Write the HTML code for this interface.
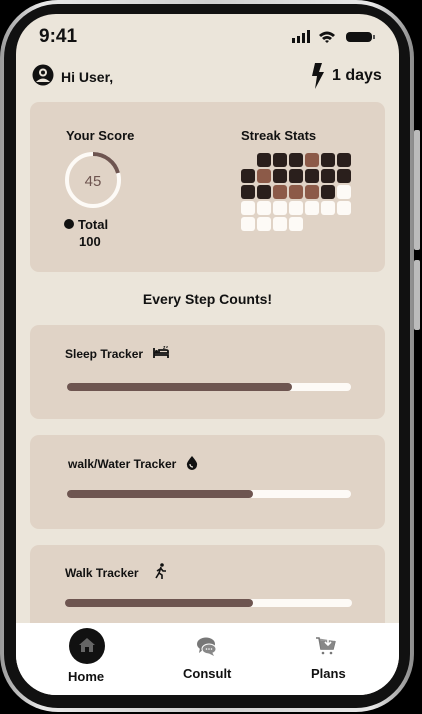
<!DOCTYPE html>
<html><head><style>
*{margin:0;padding:0;box-sizing:border-box}
body{width:422px;height:714px;background:#000;position:relative;overflow:hidden;font-family:"Liberation Sans",sans-serif;color:#111}
.frame{position:absolute;left:0;top:0;width:414px;height:712px;border-radius:58px;background:linear-gradient(90deg,#9a9a9a,#e8e8e8 10%,#cfcfcf 50%,#e8e8e8 90%,#8a8a8a)}
.bez{position:absolute;left:4px;top:4px;width:406px;height:704px;border-radius:54px;background:#111}
.btn{position:absolute;right:0;width:6px;background:#bbb;border-radius:2px}
.screen{position:absolute;left:16px;top:14px;width:383px;height:681px;border-radius:40px;background:#ebe5da;overflow:hidden}
.a{position:absolute}
.card{position:absolute;left:14px;width:355px;background:#e0d3c6;border-radius:9px}
.bar{position:absolute;height:8px;background:#fdfaf6;border-radius:4px}
.fill{height:8px;background:#6e5550;border-radius:4px}
.g{position:absolute;left:225px;top:139px;display:grid;grid-template-columns:repeat(7,14px);gap:2px}
.g i{display:block;width:14px;height:14px;border-radius:3px}
.d{background:#2a1f1c}.b{background:#8c5a48}.w{background:#fdfaf6}.n{background:transparent}
.t{font-size:13px;font-weight:bold}
</style></head><body>
<div class="frame"></div><div class="bez"></div>
<div class="btn" style="top:130px;height:120px;right:2px"></div>
<div class="btn" style="top:260px;height:70px;right:2px"></div>
<div class="screen">
<div class="a" style="left:23px;top:12px;font-size:19px;font-weight:bold">9:41</div>
<svg class="a" style="left:274px;top:16px" width="90" height="14" viewBox="0 0 90 14">
<rect x="2" y="8" width="3" height="5" fill="#111"/><rect x="7" y="6" width="3" height="7" fill="#111"/><rect x="12" y="3" width="3" height="10" fill="#111"/><rect x="17" y="0" width="3" height="13" fill="#111"/>
<path d="M29 5 Q37 -2 45 5 L43 7 Q37 2 31 7Z M32 8 Q37 4 42 8 L40 10 Q37 7.5 34 10Z M35 11 L37 13 L39 11 Q37 9.5 35 11Z" fill="#111"/>
<rect x="56" y="2" width="26" height="10" rx="4" fill="#111"/><rect x="83" y="5" width="2" height="4" fill="#555"/>
</svg>
<svg class="a" style="left:16px;top:50px" width="22" height="22" viewBox="0 0 22 22"><circle cx="11" cy="11" r="10.5" fill="#111"/><circle cx="11" cy="8.5" r="4" fill="#ebe5da"/><circle cx="11" cy="8.5" r="2" fill="#111"/><path d="M4 18 Q11 11 18 18" fill="#ebe5da"/></svg>
<div class="a" style="left:45px;top:55px;font-size:14px;font-weight:bold">Hi User,</div>
<svg class="a" style="left:295px;top:49px" width="14" height="26" viewBox="0 0 14 26"><path d="M4 0 H11 L8 9 H13 L4 26 L6 13 H1Z" fill="#111"/></svg>
<div class="a" style="left:316px;top:53px;font-size:16px;font-weight:bold">1 days</div>

<div class="card" style="top:88px;height:170px"></div>
<div class="a t" style="left:50px;top:114px">Your Score</div>
<div class="a t" style="left:225px;top:114px">Streak Stats</div>
<svg class="a" style="left:48px;top:137px" width="58" height="58" viewBox="0 0 58 58"><circle cx="29" cy="29" r="26" fill="none" stroke="#fdfaf6" stroke-width="4"/><path d="M29 3 A26 26 0 0 1 54 22" fill="none" stroke="#6e5550" stroke-width="4"/><text x="29" y="35" text-anchor="middle" font-size="15" fill="#6e5550" font-family="Liberation Sans">45</text></svg>
<div class="a" style="left:48px;top:205px;width:10px;height:10px;border-radius:50%;background:#111"></div>
<div class="a t" style="left:62px;top:203px">Total</div>
<div class="a t" style="left:63px;top:220px">100</div>
<div class="g">
<i class="n"></i><i class="d"></i><i class="d"></i><i class="d"></i><i class="b"></i><i class="d"></i><i class="d"></i>
<i class="d"></i><i class="b"></i><i class="d"></i><i class="d"></i><i class="d"></i><i class="d"></i><i class="d"></i>
<i class="d"></i><i class="d"></i><i class="b"></i><i class="b"></i><i class="b"></i><i class="d"></i><i class="w"></i>
<i class="w"></i><i class="w"></i><i class="w"></i><i class="w"></i><i class="w"></i><i class="w"></i><i class="w"></i>
<i class="w"></i><i class="w"></i><i class="w"></i><i class="w"></i>
</div>

<div class="a t" style="left:0;width:383px;text-align:center;top:277px;font-size:14px">Every Step Counts!</div>

<div class="card" style="top:311px;height:94px"></div>
<div class="a" style="left:49px;top:333px;font-size:12px;font-weight:bold">Sleep Tracker</div>
<svg class="a" style="left:137px;top:331px" width="16" height="14" viewBox="0 0 16 14"><path d="M1 3 V13 M1 10 H15 V13 M1 8 H15 V6 Q15 5 13 5 H6 V8" stroke="#111" stroke-width="1.8" fill="none"/><circle cx="3.5" cy="6.5" r="1.5" fill="#111"/><text x="10" y="4" font-size="5" font-weight="bold" fill="#111">z</text><text x="13" y="3" font-size="4" font-weight="bold" fill="#111">z</text></svg>
<div class="bar" style="left:51px;top:369px;width:284px"><div class="fill" style="width:225px"></div></div>

<div class="card" style="top:421px;height:94px"></div>
<div class="a" style="left:52px;top:443px;font-size:12px;font-weight:bold">walk/Water Tracker</div>
<svg class="a" style="left:170px;top:442px" width="12" height="14" viewBox="0 0 12 14"><path d="M6 0 Q12 7 11 9 A5 5 0 0 1 1 9 Q0 7 6 0Z" fill="#111"/><path d="M4 8 Q4 11 7 11" stroke="#ebe5da" stroke-width="1.2" fill="none"/></svg>
<div class="bar" style="left:51px;top:476px;width:284px"><div class="fill" style="width:186px"></div></div>

<div class="card" style="top:531px;height:100px"></div>
<div class="a" style="left:49px;top:552px;font-size:12px;font-weight:bold">Walk Tracker</div>
<svg class="a" style="left:139px;top:549px" width="12" height="16" viewBox="0 0 12 16"><circle cx="7" cy="2" r="1.8" fill="#111"/><path d="M6 4 L4 10 L1 15 M4 10 L7 12 L7 16 M5 6 L2 8 M5.5 5 L8 8 L11 8" stroke="#111" stroke-width="1.6" fill="none"/></svg>
<div class="bar" style="left:49px;top:585px;width:287px"><div class="fill" style="width:188px"></div></div>

<div class="a" style="left:0;top:609px;width:383px;height:72px;background:#fff"></div>
<div class="a" style="left:53px;top:614px;width:36px;height:36px;border-radius:50%;background:#111"></div>
<svg class="a" style="left:62px;top:622px" width="18" height="18" viewBox="0 0 18 18"><path d="M9 2 L17 9 H15 V16 H3 V9 H1Z" fill="#666"/><rect x="7" y="11" width="4" height="5" fill="#111"/></svg>
<div class="a t" style="left:52px;top:655px">Home</div>
<svg class="a" style="left:181px;top:623px" width="20" height="20" viewBox="0 0 20 20"><ellipse cx="9" cy="7" rx="9" ry="6.5" fill="#777"/><path d="M3 11 L2 16 L7 12Z" fill="#777"/><ellipse cx="12" cy="12" rx="7" ry="5" fill="#888" stroke="#fff" stroke-width="1"/><path d="M15 15 L17 19 L11 16Z" fill="#888"/><circle cx="9.5" cy="12" r=".8" fill="#fff"/><circle cx="12" cy="12" r=".8" fill="#fff"/><circle cx="14.5" cy="12" r=".8" fill="#fff"/></svg>
<div class="a t" style="left:167px;top:652px">Consult</div>
<svg class="a" style="left:300px;top:623px" width="20" height="20" viewBox="0 0 20 20"><path d="M0 1 H3 L5 12 H17 L19 4" stroke="#777" stroke-width="1.6" fill="#999"/><path d="M4 4 H19 L17 12 H5Z" fill="#888"/><path d="M12 1 V8 M9 5 L12 8 L15 5" stroke="#fff" stroke-width="1.6" fill="none"/><circle cx="7" cy="16" r="1.3" fill="#777"/><circle cx="15" cy="16" r="1.3" fill="#777"/></svg>
<div class="a t" style="left:295px;top:652px">Plans</div>
</div>
</body></html>
